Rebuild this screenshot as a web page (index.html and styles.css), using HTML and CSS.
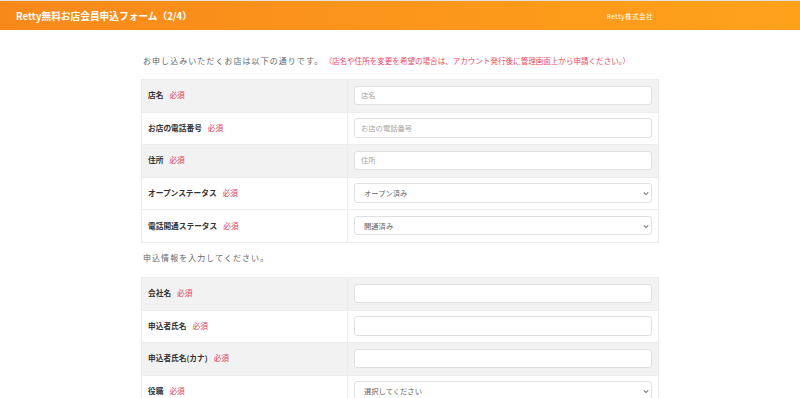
FILE: index.html
```html
<!DOCTYPE html>
<html lang="ja">
<head>
<meta charset="utf-8">
<title>Retty無料お店会員申込フォーム</title>
<link rel="stylesheet" href="styles.css">
</head>
<body>
<header class="site-header">
  <h1 class="site-title">Retty無料お店会員申込フォーム（2/4）</h1>
  <span class="company">Retty株式会社</span>
</header>
<main class="container">
  <p class="lead">お申し込みいただくお店は以下の通りです。<span class="note">（店名や住所を変更を希望の場合は、アカウント発行後に管理画面上から申請ください。）</span></p>
  <div class="form-table">
    <div class="row shade">
      <div class="label">店名<span class="req">必須</span></div>
      <div class="field"><input class="input" type="text" placeholder="店名"></div>
    </div>
    <div class="row">
      <div class="label">お店の電話番号<span class="req">必須</span></div>
      <div class="field"><input class="input" type="text" placeholder="お店の電話番号"></div>
    </div>
    <div class="row shade">
      <div class="label">住所<span class="req">必須</span></div>
      <div class="field"><input class="input" type="text" placeholder="住所"></div>
    </div>
    <div class="row">
      <div class="label">オープンステータス<span class="req">必須</span></div>
      <div class="field"><div class="select-wrap"><select class="select"><option>オープン済み</option></select><svg class="chev" viewBox="0 0 8 6" width="6" height="5"><path d="M1 1.5 L4 4.5 L7 1.5" fill="none" stroke="#777" stroke-width="1.4"/></svg></div></div>
    </div>
    <div class="row">
      <div class="label">電話開通ステータス<span class="req">必須</span></div>
      <div class="field"><div class="select-wrap"><select class="select"><option>開通済み</option></select><svg class="chev" viewBox="0 0 8 6" width="6" height="5"><path d="M1 1.5 L4 4.5 L7 1.5" fill="none" stroke="#777" stroke-width="1.4"/></svg></div></div>
    </div>
  </div>
  <p class="lead section">申込情報を入力してください。</p>
  <div class="form-table">
    <div class="row shade">
      <div class="label">会社名<span class="req">必須</span></div>
      <div class="field"><input class="input" type="text"></div>
    </div>
    <div class="row">
      <div class="label">申込者氏名<span class="req">必須</span></div>
      <div class="field"><input class="input" type="text"></div>
    </div>
    <div class="row shade">
      <div class="label">申込者氏名(カナ)<span class="req">必須</span></div>
      <div class="field"><input class="input" type="text"></div>
    </div>
    <div class="row">
      <div class="label">役職<span class="req">必須</span></div>
      <div class="field"><div class="select-wrap"><select class="select"><option>選択してください</option></select><svg class="chev" viewBox="0 0 8 6" width="6" height="5"><path d="M1 1.5 L4 4.5 L7 1.5" fill="none" stroke="#777" stroke-width="1.4"/></svg></div></div>
    </div>
  </div>
</main>
</body>
</html>
```
FILE: styles.css
```css
* { box-sizing: border-box; }
html, body { margin: 0; padding: 0; background: #fff; }
body {
  font-family: "Noto Sans CJK JP", "Noto Sans", sans-serif;
  color: #555;
}
.site-header {
  height: 30px;
  border-top: 1px solid #e2e2e2;
  background: linear-gradient(to right, #f7891b, #ffa21a);
  display: flex;
  align-items: center;
  justify-content: space-between;
  padding: 0 147px 0 16px;
  color: #fff;
}
.site-title {
  margin: 0;
  font-size: 9.7px;
  font-weight: 700;
  line-height: 14px;
}
.company {
  font-size: 6.5px;
  letter-spacing: 0.5px;
  line-height: 10px;
}
.container {
  width: 518px;
  margin: 0 auto;
}
.lead {
  margin: 0;
  padding: 23px 0 10px 2px;
  font-size: 8px;
  line-height: 16px;
  letter-spacing: 1.05px;
  color: #666;
}
.lead.section {
  padding: 7px 0 11px 2px;
}
.note {
  margin-left: 5px;
  font-size: 7.55px;
  letter-spacing: 0;
  color: #e8475f;
}
.form-table {
  border: 1px solid #ececec;
  border-bottom: none;
}
.row {
  display: grid;
  grid-template-columns: 206px 1fr;
  height: 32.6px;
  border-bottom: 1px solid #ececec;
  background: #fff;
}
.row.shade { background: #f2f2f2; }
.label {
  display: flex;
  align-items: center;
  padding-left: 6px;
  padding-bottom: 2px;
  font-size: 7.7px;
  font-weight: 700;
  color: #333;
  border-right: 1px solid #ececec;
}
.req {
  margin-left: 6px;
  font-weight: 400;
  color: #e0405a;
}
.field {
  display: flex;
  align-items: center;
  padding: 0 6px 1px;
}
.input, .select {
  width: 100%;
  height: 19.5px;
  border: 1px solid #e0e0e0;
  border-radius: 3px;
  background: #fff;
  font-family: inherit;
  font-size: 7.3px;
  color: #666;
  outline: none;
  margin: 0;
}
.input { padding: 0 6px; }
.input::placeholder { color: #a5a5a5; }
.select-wrap {
  position: relative;
  width: 100%;
  display: flex;
}
.select {
  -webkit-appearance: none;
  appearance: none;
  padding: 0 18px 0 9px;
  color: #666;
}
.chev {
  position: absolute;
  right: 3px;
  top: 50%;
  transform: translateY(-40%);
  pointer-events: none;
}
```
